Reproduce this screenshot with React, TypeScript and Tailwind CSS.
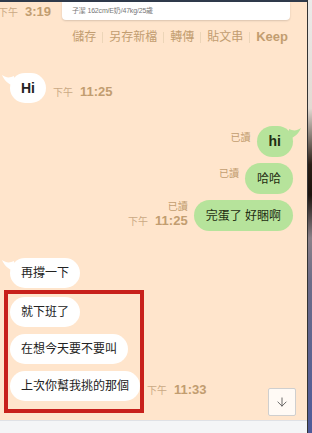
import React from "react";
import { ArrowDown } from "lucide-react";

const font = "font-['Liberation_Sans','Noto_Sans_CJK_TC',sans-serif]";

function TailLeft() {
  return (
    <svg className="absolute -left-[8px] top-[1px]" width="12" height="12" viewBox="0 0 12 12">
      <path d="M12 2 C8 4 4 4 0 1 C2 6 6 10 12 12 Z" fill="#ffffff" />
    </svg>
  );
}

function TailRight() {
  return (
    <svg className="absolute -right-[8px] top-[1px]" width="12" height="12" viewBox="0 0 12 12">
      <path d="M0 2 C4 4 8 4 12 1 C10 6 6 10 0 12 Z" fill="#b6e39b" />
    </svg>
  );
}

function WhiteBubble({ text, tail }: { text: string; tail?: boolean }) {
  return (
    <div className="relative flex h-[30px] items-center rounded-[15px] bg-white px-[11px] text-[12px] text-[#222]">
      {tail && <TailLeft />}
      {text}
    </div>
  );
}

function GreenBubble({ text, tail, bold }: { text: string; tail?: boolean; bold?: boolean }) {
  return (
    <div
      className={`relative flex h-[31px] items-center rounded-[16px] bg-[#b6e39b] px-[12px] text-[#1f2d12] ${
        bold ? "text-[14px] font-bold" : "text-[12px]"
      }`}
    >
      {tail && <TailRight />}
      {text}
    </div>
  );
}

function Time({ t }: { t: string }) {
  return (
    <span className="flex items-baseline whitespace-nowrap text-[#c29d70]">
      <span className="text-[10px] text-[#caa984]">下午</span>
      <span className="ml-[7px] text-[13px] font-bold leading-none">{t}</span>
    </span>
  );
}

function Sep() {
  return <span className="mx-[6px] inline-block h-[11px] w-px bg-[#ecd5b8]" />;
}

export default function App() {
  return (
    <div className={`flex h-[433px] w-[312px] overflow-hidden ${font}`}>
      <div className="relative flex w-[307px] flex-col bg-[#ffe5cc]">
        <div className="h-[2px] bg-[#2f3a4b]" />
        {/* header */}
        <div className="flex h-[18px]">
          <div className="-ml-[2px] flex w-[64px] items-end">
            <Time t="3:19" />
          </div>
          <div className="flex w-[228px] items-center rounded-b-[4px] bg-white pl-[10px] shadow-[0_1px_2px_rgba(0,0,0,0.15)]">
            <span className="text-[7px] tracking-tight text-[#777]">子潔 162cm/E奶/47kg/25歲</span>
          </div>
        </div>
        {/* actions */}
        <div className="mt-[9px] flex h-[16px] items-center justify-end pr-[19px] text-[12px] text-[#c29d70]">
          <span>儲存</span>
          <Sep />
          <span>另存新檔</span>
          <Sep />
          <span>轉傳</span>
          <Sep />
          <span>貼文串</span>
          <Sep />
          <span className="text-[13px] font-bold">Keep</span>
        </div>

        {/* Hi */}
        <div className="mt-[28px] flex items-end pl-[10px]">
          <div className="relative flex h-[30px] items-center rounded-[15px] bg-white px-[11px] text-[14px] font-bold text-[#222]">
            <TailLeft />
            Hi
          </div>
          <div className="mb-[3px] ml-[7px]">
            <Time t="11:25" />
          </div>
        </div>

        {/* green */}
        <div className="mt-[23px] flex items-start justify-end pr-[14px]">
          <span className="mr-[6px] mt-[4px] text-[10px] text-[#c29d70]">已讀</span>
          <GreenBubble text="hi" tail bold />
        </div>
        <div className="mt-[6px] flex items-start justify-end pr-[14px]">
          <span className="mr-[6px] mt-[3px] text-[10px] text-[#c29d70]">已讀</span>
          <GreenBubble text="哈哈" />
        </div>
        <div className="mt-[6px] flex items-end justify-end pr-[14px]">
          <div className="mb-[2px] mr-[6px] flex flex-col items-end">
            <span className="text-[10px] leading-[14px] text-[#c29d70]">已讀</span>
            <Time t="11:25" />
          </div>
          <GreenBubble text="完蛋了 好睏啊" />
        </div>

        {/* white group */}
        <div className="mt-[27px] flex pl-[10px]">
          <WhiteBubble text="再撐一下" tail />
        </div>
        <div className="mt-[9px] flex pl-[10px]">
          <WhiteBubble text="就下班了" />
        </div>
        <div className="mt-[7px] flex pl-[10px]">
          <WhiteBubble text="在想今天要不要叫" />
        </div>
        <div className="mt-[7px] flex items-end pl-[10px]">
          <WhiteBubble text="上次你幫我挑的那個" />
          <div className="mb-[3px] ml-[7px]">
            <Time t="11:33" />
          </div>
        </div>

        <div className="flex-1" />
        <div className="h-[13px] border-t border-[#dfe1e6] bg-[#f4f5f7]" />

        {/* annotation box */}
        <div className="pointer-events-none absolute left-[4px] top-[290px] h-[123px] w-[140px] border-[4px] border-[#c8201b]" />

        {/* scroll down button */}
        <div className="absolute right-[11px] top-[388px] flex h-[28px] w-[28px] items-center justify-center rounded-[2px] border border-[#cfcfcf] bg-[#fffaf5]">
          <ArrowDown size={14} strokeWidth={1.5} color="#555" />
        </div>
      </div>
      <div className="w-px bg-[#333]" />
      <div className="w-[4px] bg-[linear-gradient(to_bottom,#ecebea_0%,#e2dad2_25%,#2a1e16_38%,#1c140e_45%,#8a8088_55%,#6c6c88_65%,#4d5a9a_100%)]" />
    </div>
  );
}
